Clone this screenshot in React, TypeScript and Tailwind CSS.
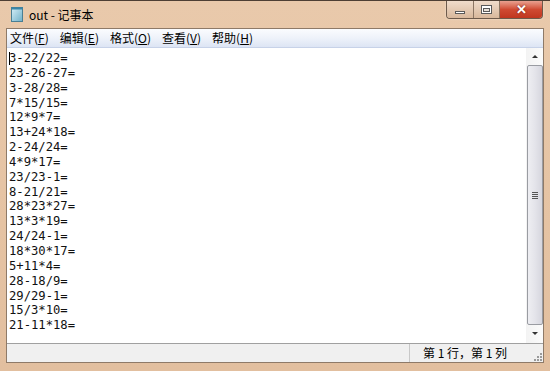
import React from 'react';

const lines = [
  '3-22/22=',
  '23-26-27=',
  '3-28/28=',
  '7*15/15=',
  '12*9*7=',
  '13+24*18=',
  '2-24/24=',
  '4*9*17=',
  '23/23-1=',
  '8-21/21=',
  '28*23*27=',
  '13*3*19=',
  '24/24-1=',
  '18*30*17=',
  '5+11*4=',
  '28-18/9=',
  '29/29-1=',
  '15/3*10=',
  '21-11*18=',
];

const menus: [string, string][] = [
  ['文件', 'F'],
  ['编辑', 'E'],
  ['格式', 'O'],
  ['查看', 'V'],
  ['帮助', 'H'],
];

const ui = '"Noto Sans CJK SC", "Liberation Sans", sans-serif';

function NotepadIcon() {
  return (
    <svg width="12" height="15" viewBox="0 0 12 15">
      <defs>
        <linearGradient id="np" x1="0" y1="0" x2="1" y2="1">
          <stop offset="0" stopColor="#d8f0f8" />
          <stop offset="1" stopColor="#6fb0c8" />
        </linearGradient>
      </defs>
      <rect x="0.5" y="0.5" width="11" height="14" fill="url(#np)" stroke="#4a7f94" />
      <rect x="0.5" y="0.5" width="11" height="2" fill="#3b86a8" />
    </svg>
  );
}

export default function App() {
  return (
    <div
      className="w-[550px] h-[371px] overflow-hidden flex flex-col bg-gradient-to-b from-[#e9c9ab] via-[#e6c4a4] to-[#e2bf9f] border-t border-[#4e3f34]"
      style={{ fontFamily: ui }}
    >
      {/* title bar */}
      <div className="h-[27px] shrink-0 flex items-start relative">
        <div className="flex items-center gap-[6px] pl-[11px] pt-[6px]">
          <NotepadIcon />
          <span className="text-[12px] text-black leading-none">out - 记事本</span>
        </div>
        <div className="ml-auto mr-[7px] flex h-[18px] rounded-b-[4px] overflow-hidden border border-t-0 border-[#6d5a4b] shadow-[0_0_2px_rgba(255,255,255,0.6)]">
          <div className="w-[27px] flex items-center justify-center bg-gradient-to-b from-[#f0dccb] to-[#d8b89c] border-r border-[#8c7663]">
            <div className="w-[10px] h-[3px] mt-[5px] bg-white border border-[#5a5a5a]" />
          </div>
          <div className="w-[26px] flex items-center justify-center bg-gradient-to-b from-[#f0dccb] to-[#d8b89c] border-r border-[#8c7663]">
            <div className="w-[11px] h-[9px] bg-white border border-[#5a5a5a] flex items-center justify-center">
              <div className="w-[7px] h-[4px] mt-[1px] bg-[#e8e0d8] border border-[#5a5a5a]" />
            </div>
          </div>
          <div className="w-[42px] flex items-center justify-center bg-gradient-to-b from-[#e8a090] via-[#cf4a32] to-[#c0361f]">
            <span className="text-white text-[13px] font-bold leading-none" style={{ fontFamily: '"Liberation Sans", sans-serif', textShadow: '0 0 2px #6a1a0a' }}>
              ✕
            </span>
          </div>
        </div>
      </div>

      {/* client */}
      <div className="flex-1 mx-[6px] mb-[8px] flex flex-col border border-[#8e7a68] bg-white min-h-0">
        {/* menu */}
        <div className="h-[19px] shrink-0 flex items-center gap-[11px] pl-[3px] bg-gradient-to-b from-[#fbfcfe] via-[#eef2fa] to-[#dde5f4] border-b border-[#c7d2e8]">
          {menus.map(([name, key]) => (
            <span key={key} className="text-[12px] leading-none text-black">
              {name}(<span className="underline">{key}</span>)
            </span>
          ))}
        </div>

        {/* edit area */}
        <div className="flex-1 flex min-h-0 bg-white">
          <div
            className="flex-1 pl-[2px] pt-[3px] text-[12.2px] leading-[14.85px] text-[#111]"
            style={{ fontFamily: '"DejaVu Sans Mono", "Liberation Mono", monospace' }}
          >
            {lines.map((l, i) => (
              <div key={i} className="relative">
                {i === 0 && <span className="absolute left-0 top-[1px] w-px h-[13px] bg-black" />}
                {l}
              </div>
            ))}
          </div>
          {/* scrollbar */}
          <div className="w-[17px] shrink-0 flex flex-col bg-gradient-to-r from-[#f3f3f3] to-[#fbfbfb] pl-[1px] pb-[1px]">
            <div className="h-[17px] flex items-center justify-center">
              <div className="w-0 h-0 border-l-[3px] border-r-[3px] border-b-[3px] border-l-transparent border-r-transparent border-b-[#333]" />
            </div>
            <div className="flex-1 rounded-[2px] border border-[#9a9ca2] bg-gradient-to-r from-[#eeeef2] via-[#e4e4ea] to-[#d6d6de] flex items-center justify-center">
              <div className="flex flex-col gap-[1px]">
                <div className="w-[6px] h-[1px] bg-[#555]" />
                <div className="w-[6px] h-[1px] bg-[#555]" />
                <div className="w-[6px] h-[1px] bg-[#555]" />
                <div className="w-[6px] h-[1px] bg-[#555]" />
              </div>
            </div>
            <div className="h-[17px] flex items-center justify-center">
              <div className="w-0 h-0 border-l-[3px] border-r-[3px] border-t-[3px] border-l-transparent border-r-transparent border-t-[#333]" />
            </div>
          </div>
        </div>

        {/* status bar */}
        <div className="h-[19px] shrink-0 flex items-center bg-[#f0f0f0] border-t border-[#a0a0a0] relative">
          <div className="ml-auto w-[134px] h-full border-l border-[#c8c8c8] flex items-center pl-[13px]">
            <span className="text-[12px] leading-none text-black" style={{ fontFamily: ui }}>
              第 1 行，第 1 列
            </span>
          </div>
          <svg className="absolute right-[1px] bottom-[1px]" width="9" height="9" viewBox="0 0 9 9">
            <rect x="7" y="7" width="2" height="2" fill="#9a9a9a" />
            <rect x="4" y="7" width="2" height="2" fill="#9a9a9a" />
            <rect x="7" y="4" width="2" height="2" fill="#9a9a9a" />
            <rect x="1" y="7" width="2" height="2" fill="#9a9a9a" />
            <rect x="4" y="4" width="2" height="2" fill="#9a9a9a" />
            <rect x="7" y="1" width="2" height="2" fill="#9a9a9a" />
          </svg>
        </div>
      </div>
    </div>
  );
}
